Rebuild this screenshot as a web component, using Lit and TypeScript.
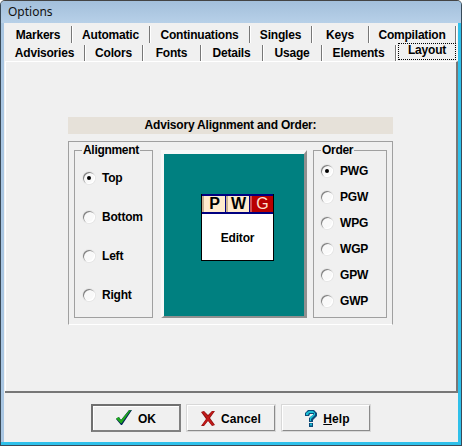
import { LitElement, html, css, svg } from "lit";
import { customElement } from "lit/decorators.js";

const row1 = [["Markers", 67], ["Automatic", 78], ["Continuations", 100], ["Singles", 62], ["Keys", 57], ["Compilation", 87]] as const;
const row2 = [["Advisories", 80], ["Colors", 58], ["Fonts", 58], ["Details", 62], ["Usage", 59], ["Elements", 74]] as const;
const aligns = ["Top", "Bottom", "Left", "Right"];
const orders = ["PWG", "PGW", "WPG", "WGP", "GPW", "GWP"];

const check = svg`<svg width="16" height="16" viewBox="0 0 16 16"><path d="M0 9l3-2 2 3 8-10h3l-10 15H5z" fill="#00205a"/><path d="M0 8.500l2.500-1.500 2.500 3 8.500-10h1.500l-9.500 13.500H5z" fill="#1fa81c"/></svg>`;
const cross = svg`<svg width="14" height="15" viewBox="0 0 14 15"><path d="M0 1l3-1 4 4 4-4h3l-5 7 5 7-3 1-4-5-4 5H0l5-7z" fill="#8f1212"/><path d="M1 1l2-.500 4 5 4-5h2L8 7l5 7-2 .300-4-5-4 5H1l5-7z" fill="#c21a1a"/></svg>`;
const help = svg`<svg width="12" height="17" viewBox="0 0 12 17"><path d="M0 3l3-3h6l3 3v3l-4 4v2H4V8l4-3V4H5L4 6H0z" fill="#0b4a78"/><path d="M1 3l3-2h4l2 2v2L6 9v2H5V7l4-3V3H4L3 5H1z" fill="#1cc0d6"/><path d="M4 13h4v4H4z" fill="#0b4a78"/><path d="M5 13.500h2v2H5z" fill="#1cc0d6"/></svg>`;

@customElement("app-root")
export class AppRoot extends LitElement {
  static styles = css`
    :host { display: block; width: 462px; height: 446px; font-family: "Liberation Sans", Arial, sans-serif; color: #000; }
    * { box-sizing: border-box; }
    .window { width: 462px; height: 446px; background: #f0f0f0; border: 1px solid #3a4a58; border-top-color: #444; border-radius: 5px 5px 0 0; display: flex; flex-direction: column; overflow: hidden; box-shadow: inset -3px -3px 0 #2fc0ea, inset 3px 0 0 #a9c6e2; }
    .title { height: 22px; flex: none; background: linear-gradient(#a3bfdb, #b7d0e8); padding: 2px 0 0 7px; font: 12px "Noto Sans", "Open Sans", sans-serif; color: #111; line-height: 18px; }
    .body { flex: 1; margin: 0 3px 4px 4px; display: flex; flex-direction: column; min-height: 0; background: #f0f0f0; }
    .tabs { display: flex; height: 18px; flex: none; font-weight: bold; font-size: 12px; letter-spacing: -0.2px; }
    .tabs.top { height: 20px; }
    .tab { flex: none; text-align: center; border-right: 1px solid #777; box-shadow: 1px 0 0 #fff; margin-top: 2px; line-height: 17px; white-space: nowrap; }
    .tabs.top .tab { margin-top: 3px; line-height: 18px; }
    .tab.sel { margin-left: 2px; width: 58px; height: 17px; margin-top: 0; border: 1px dotted #000; box-shadow: none; line-height: 13px; background: #f0f0f0; }
    .panel { flex: 1; min-height: 0; border-top: 1px solid #fff; border-right: 2px solid #777; border-bottom: 2px solid #777; box-shadow: inset 1px 0 0 #fff; display: flex; flex-direction: column; padding: 55px 0 0 63px; }
    .heading { width: 325px; height: 17px; background: #e6e1d9; font-weight: bold; font-size: 12px; letter-spacing: -0.2px; line-height: 17px; text-align: center; }
    .group { width: 325px; height: 184px; margin-top: 7px; border: 1px solid #a0a0a0; border-bottom-color: #fff; display: flex; padding: 8px 5px 0 5px; gap: 8px; }
    .field { position: relative; height: 168px; border: 1px solid #a0a0a0; display: flex; flex-direction: column; flex: none; }
    .legend { position: absolute; top: -7px; left: 7px; background: #f0f0f0; padding: 0 1px; font-weight: bold; font-size: 12px; letter-spacing: -0.3px; line-height: 13px; }
    .align { width: 79px; padding-top: 7px; }
    .order { width: 74px; padding-top: 7px; margin-left: -2px; }
    .opt { display: flex; align-items: center; font-weight: bold; font-size: 12px; letter-spacing: -0.2px; }
    .align .opt { height: 39px; padding-left: 8px; gap: 7px; }
    .order .opt { height: 26px; padding-left: 7px; gap: 7px; }
    .radio { width: 12px; height: 12px; border-radius: 50%; background: #f9f9f9; box-shadow: inset 1px 1px 0 #808080, inset -1px -1px 0 #fff, 0 0 0 1px #e6e6e6; display: flex; align-items: center; justify-content: center; flex: none; }
    .radio.on::after { content: ""; width: 4px; height: 4px; border-radius: 50%; background: #000; }
    .preview { width: 146px; height: 168px; flex: none; border: 3px solid #f8f8f8; border-right-color: #909090; border-bottom-color: #909090; border-top-width: 4px; border-bottom-width: 2px; background: #008080; display: flex; justify-content: center; padding: 40px 0 0 7px; }
    .editor { width: 73px; height: 67px; background: #fff; border: 1px solid #000; border-top: 0; display: flex; flex-direction: column; }
    .head { height: 20px; flex: none; border-top: 2px solid #000080; border-bottom: 2px solid #000080; display: flex; background: #ffebcd; }
    .cell { flex: 1; text-align: center; font-weight: bold; font-size: 16px; line-height: 16px; border-left: 2px solid #c8b090; border-right: 1px solid #000080; }
    .cell.red { background: #b80000; color: #ffe0d0; border-left-color: #d05050; border-right: 0; font-weight: normal; }
    .name { flex: 1; display: flex; align-items: center; justify-content: center; font-weight: bold; font-size: 12px; letter-spacing: -0.2px; padding-top: 1px; }
    .buttons { flex: none; height: 48px; display: flex; gap: 5px; padding: 11px 0 0 86px; }
    .btn { width: 90px; height: 28px; background: #f0f0f0; border: 2px solid #fff; border-right-color: #8a8a8a; border-bottom-color: #8a8a8a; display: flex; align-items: center; justify-content: center; gap: 6px; font: bold 12px "Liberation Sans", sans-serif; letter-spacing: 0.1px; padding: 0; color: #000; outline: 1px solid #d8d8d8; outline-offset: -1px; }
    .btn.def { border: 2px solid #808080; border-top-color: #707070; border-left-color: #707070; outline: none; box-shadow: inset 1px 1px 0 #fff; }
    .btn.help { padding-left: 3px; }
    .btn svg { flex: none; }
    .btn span { padding-top: 2px; }
    u { text-decoration: underline; }
  `;

  render() {
    return html`<div class="window">
      <div class="title">Options</div>
      <div class="body">
        <div class="tabs top">${row1.map(([t, w]) => html`<div class="tab" style="width:${w}px">${t}</div>`)}</div>
        <div class="tabs">
          ${row2.map(([t, w]) => html`<div class="tab" style="width:${w}px">${t}</div>`)}
          <div class="tab sel">Layout</div>
        </div>
        <div class="panel">
          <div class="heading">Advisory Alignment and Order:</div>
          <div class="group">
            <div class="field align">
              <div class="legend">Alignment</div>
              ${aligns.map((a, i) => html`<div class="opt"><span class="radio ${i === 0 ? "on" : ""}"></span>${a}</div>`)}
            </div>
            <div class="preview">
              <div class="editor">
                <div class="head"><div class="cell">P</div><div class="cell">W</div><div class="cell red">G</div></div>
                <div class="name">Editor</div>
              </div>
            </div>
            <div class="field order">
              <div class="legend">Order</div>
              ${orders.map((a, i) => html`<div class="opt"><span class="radio ${i === 0 ? "on" : ""}"></span>${a}</div>`)}
            </div>
          </div>
        </div>
        <div class="buttons">
          <button class="btn def">${check}<span>OK</span></button>
          <button class="btn">${cross}<span>Cancel</span></button>
          <button class="btn help">${help}<span><u>H</u>elp</span></button>
        </div>
      </div>
    </div>`;
  }
}
